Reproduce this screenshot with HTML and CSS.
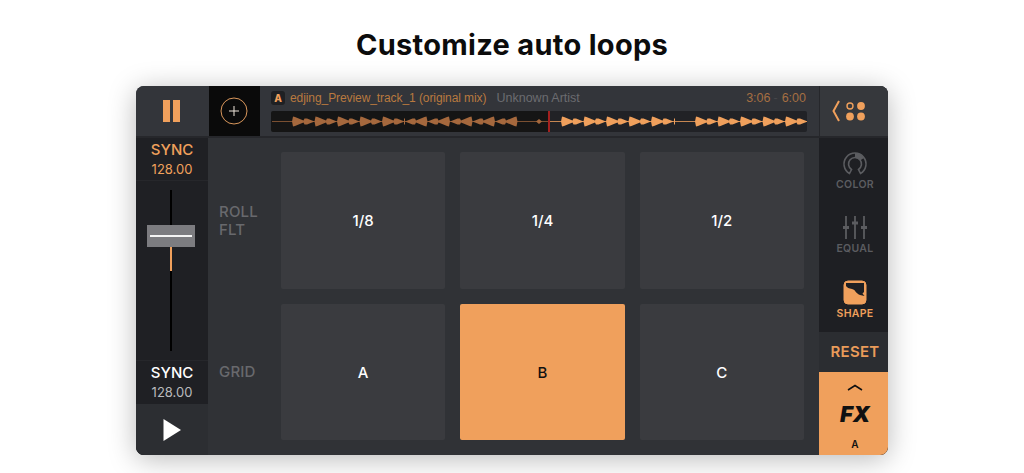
FILE: index.html
```html
<!DOCTYPE html>
<html lang="en">
<head>
<meta charset="utf-8">
<title>Customize auto loops</title>
<link rel="stylesheet" href="styles.css">
</head>
<body>
<h1 class="title">Customize auto loops</h1>
<div class="app">
  <div class="top">
    <div class="pause"><i></i><i></i></div>
    <div class="add">
      <svg width="28" height="28" viewBox="0 0 28 28"><circle cx="14" cy="14" r="13" fill="none" stroke="#d9975c" stroke-width="1"/><path d="M9 14h10M14 9v10" stroke="#f0e6dc" stroke-width="1" fill="none"/></svg>
    </div>
    <div class="track">
      <div class="meta">
        <span class="badge">A</span>
        <span class="name">edjing_Preview_track_1 (original mix)</span>
        <span class="artist">Unknown Artist</span>
        <span class="time">3:06<em>-</em>6:00</span>
      </div>
      <svg class="wave" width="536" height="21" viewBox="0 0 536 21">
        <defs>
          <path id="rp" d="M0 10.500 1 5.500 3 6 11.500 9.500 12.500 7.500 15 7.500 22.500 10.500 15 13.500 12.500 13.500 11.500 11.500 3 15 1 15.500Z"/>
          <path id="lp" d="M22.500 10.500 21.500 5.500 19.500 6 11 9.500 10 7.500 7.500 7.500 0 10.500 7.500 13.500 10 13.500 11 11.500 19.500 15 21.500 15.500Z"/>
        </defs>
        <rect width="278" height="21" x="0" fill="#151515"/>
        <rect x="278" width="258" height="21" fill="#212226"/>
        <g fill="#a5683d">
          <rect x="1" y="10" width="276" height="1" opacity="0.7"/>
          <use href="#rp" x="21"/><use href="#rp" x="43.500"/><use href="#rp" x="66"/><use href="#rp" x="88.500"/><use href="#rp" x="111"/>
          <rect x="133" y="7.500" width="1" height="6"/>
          <use href="#lp" x="134"/><use href="#lp" x="156.500"/><use href="#lp" x="179"/><use href="#lp" x="201.500"/><use href="#lp" x="224"/>
          <path d="M265 10.500 268 8 271 10.500 268 13Z"/>
        </g>
        <g fill="#f0a05c">
          <rect x="279" y="10" width="257" height="1" opacity="0.8"/>
          <use href="#rp" x="290"/><use href="#rp" x="312.500"/><use href="#rp" x="335"/><use href="#rp" x="357.500"/><use href="#rp" x="380"/>
          <rect x="403" y="7.500" width="1" height="6"/>
          <use href="#rp" x="424"/><use href="#rp" x="446.500"/><use href="#rp" x="469"/><use href="#rp" x="491.500"/><use href="#rp" x="514"/>
        </g>
        <rect x="277" width="2" height="21" fill="#a4201f"/>
      </svg>
    </div>
    <div class="menu">
      <svg width="36" height="24" viewBox="0 0 36 24"><path d="M7 2 1.500 12 7 22" fill="none" stroke="#f0a05c" stroke-width="2"/><circle cx="18" cy="7" r="3" fill="none" stroke="#f0a05c" stroke-width="1.400"/><circle cx="29" cy="7" r="3.900" fill="#f0a05c"/><circle cx="18" cy="17.500" r="3.900" fill="#f0a05c"/><circle cx="29" cy="17.500" r="3.900" fill="#f0a05c"/></svg>
    </div>
  </div>
  <div class="main">
    <div class="left">
      <div class="sync sync-a"><b>SYNC</b><span>128.00</span></div>
      <div class="slider">
        <div class="rail"></div>
        <div class="level"></div>
        <div class="cap"></div>
      </div>
      <div class="sync sync-b"><b>SYNC</b><span>128.00</span></div>
      <div class="play">
        <svg width="20" height="24" viewBox="0 0 20 24"><path d="M1.500 1 19 12 1.500 23Z" fill="#fff"/></svg>
      </div>
    </div>
    <div class="pads">
      <div class="label">ROLL<br>FLT</div>
      <div class="pad">1/8</div>
      <div class="pad">1/4</div>
      <div class="pad">1/2</div>
      <div class="label">GRID</div>
      <div class="pad">A</div>
      <div class="pad on">B</div>
      <div class="pad">C</div>
    </div>
    <div class="right">
      <div class="tool">
        <svg width="26" height="25" viewBox="0 0 26 25"><path d="M7.500 22.500A11 11 0 1 1 18.500 22.500L16.500 18.500A6.500 6.500 0 1 0 9.500 18.500Z" fill="none" stroke="#5b5c60" stroke-width="1.600"/><path d="M13 2V7A6 6 0 0 1 18 9.500L22 7A11 11 0 0 0 13 2Z" fill="#5b5c60"/></svg>
        <span>COLOR</span>
      </div>
      <div class="tool">
        <svg width="26" height="25" viewBox="0 0 26 25"><path d="M4 1v23M13 1v23M22 1v23" stroke="#5b5c60" stroke-width="1.800" fill="none"/><path d="M1 12.500h6M10 8h6M19 12.500h6" stroke="#5b5c60" stroke-width="3" fill="none"/></svg>
        <span>EQUAL</span>
      </div>
      <div class="tool tool-on">
        <svg width="24" height="25" viewBox="0 0 24 25"><rect x="1" y="1" width="22" height="23" rx="4" fill="#f0a05c" stroke="#f0a05c"/><path d="M3 3H21V12L19.500 13.500 21.500 16 17 15C12 13 13 10 9 9 6 8.500 4 7.500 3 6Z" fill="#1e1f23"/></svg>
        <span>SHAPE</span>
      </div>
      <div class="reset">RESET</div>
      <div class="fx">
        <svg width="16" height="7" viewBox="0 0 16 7"><path d="M1 6 8 1.500 15 6" fill="none" stroke="#111" stroke-width="1.500"/></svg>
        <strong>FX</strong>
        <span>A</span>
      </div>
    </div>
  </div>
</div>
</body>
</html>
```
FILE: styles.css
```css
* { box-sizing: border-box; }
html, body { margin: 0; height: 100%; overflow: hidden; }
body {
  background: #fff;
  font-family: Inter, "Liberation Sans", sans-serif;
  display: flex;
  flex-direction: column;
  align-items: center;
}
.title {
  margin: 26px 0 0;
  height: 60px;
  font-size: 29px;
  line-height: 37px;
  font-weight: 700;
  color: #0c0c0c;
  letter-spacing: 0.3px;
}
.app {
  width: 752px;
  height: 369px;
  border-radius: 8px;
  overflow: hidden;
  display: flex;
  flex-direction: column;
  background: #313337;
  box-shadow: 0 4px 28px rgba(0, 0, 0, 0.28);
}
.top {
  height: 52px;
  flex: none;
  display: flex;
  background: #33353a;
  border-bottom: 2px solid #26272b;
}
.pause {
  width: 73px;
  display: flex;
  justify-content: center;
  align-items: center;
  gap: 3px;
  padding: 0 2px 1px 0;
}
.pause i { width: 7px; height: 22px; background: #f0a05c; }
.add {
  width: 51px;
  background: #0a0a0a;
  display: flex;
  align-items: center;
  justify-content: center;
  padding-right: 2px;
}
.track {
  flex: 1;
  padding: 5px 12px 0 11px;
  display: flex;
  flex-direction: column;
  gap: 6px;
}
.meta {
  height: 14px;
  display: flex;
  align-items: center;
  font-family: "Liberation Sans", sans-serif;
  font-size: 12.500px;
}
.badge {
  width: 14px;
  height: 14px;
  border-radius: 3px;
  background: #1f2023;
  color: #f0a05c;
  font-family: Inter, sans-serif;
  font-weight: 800;
  font-size: 10px;
  display: flex;
  align-items: center;
  justify-content: center;
  margin-right: 5px;
}
.name { color: #b9793f; font-size: 12px; letter-spacing: -0.080px; }
.artist { color: #6b6c70; margin-left: 10px; }
.time { color: #a56f42; margin-left: auto; margin-right: 1px; }
.time em { font-style: normal; color: #45464a; margin: 0 4px 0 3px; }
.wave { display: block; border-radius: 2px; }
.menu {
  width: 69px;
  border-left: 1px solid #26272b;
  display: flex;
  align-items: center;
  justify-content: center;
  padding-right: 8px;
  background: #36383c;
}
.main { flex: 1; display: flex; min-height: 0; }
.left {
  width: 72px;
  flex: none;
  display: flex;
  flex-direction: column;
  background: #1f2024;
}
.sync {
  display: flex;
  flex-direction: column;
  align-items: center;
  justify-content: center;
  gap: 2px;
  height: 43px;
  flex: none;
}
.sync b { font-size: 15px; line-height: 18px; font-weight: 500; }
.sync span { font-size: 13px; line-height: 16px; }
.sync-a { color: #f0a05c; border-bottom: 1px solid #26272b; }
.sync-b { color: #fff; border-top: 1px solid #26272b; height: 44px; padding-bottom: 2px; }
.sync-b span { color: #b9babd; }
.slider { flex: 1; position: relative; }
.rail {
  position: absolute;
  left: 34px;
  top: 9px;
  bottom: 9px;
  width: 2px;
  background: #000;
}
.level {
  position: absolute;
  left: 34px;
  top: 66px;
  width: 2px;
  height: 24px;
  background: #f0a05c;
}
.cap {
  position: absolute;
  left: 11px;
  top: 44px;
  width: 48px;
  height: 22px;
  background: #7c7c80;
}
.cap::after {
  content: "";
  display: block;
  height: 2px;
  margin: 10px 3px 0;
  background: #f4f4f4;
}
.play {
  height: 51px;
  flex: none;
  background: #2c2e32;
  display: flex;
  align-items: center;
  justify-content: center;
}
.pads {
  flex: 1;
  display: grid;
  grid-template-columns: 47px 1fr 1fr 1fr;
  grid-template-rows: 137px 136px;
  gap: 15px;
  padding: 14px 15px 15px 11px;
  background: #303236;
}
.label {
  align-self: center;
  color: #68696d;
  font-size: 15px;
  line-height: 18px;
  font-weight: 500;
  letter-spacing: 0.2px;
}
.pad {
  background: #3a3b3f;
  border-radius: 2px;
  color: #fff;
  display: flex;
  align-items: center;
  justify-content: center;
  font-size: 15px;
  font-weight: 500;
}
.pad.on { background: #f0a05c; color: #111; }
.right {
  width: 69px;
  flex: none;
  display: flex;
  flex-direction: column;
  background: #1e1f23;
}
.tool {
  height: 64.670px;
  flex: none;
  display: flex;
  flex-direction: column;
  align-items: center;
  justify-content: flex-end;
  gap: 2px;
  padding: 0 0 11px 3px;
  color: #5b5c60;
  font-size: 10.500px;
  line-height: 14px;
  font-weight: 600;
  letter-spacing: 0.3px;
}
.tool-on { color: #f0a05c; }
.reset {
  height: 40px;
  flex: none;
  background: #2b2d31;
  color: #ea9c5a;
  font-size: 15px;
  font-weight: 600;
  display: flex;
  align-items: center;
  justify-content: center;
  letter-spacing: 0.3px;
  padding-left: 3px;
}
.fx {
  flex: 1;
  background: #f0a05c;
  color: #111;
  display: flex;
  flex-direction: column;
  align-items: center;
  padding: 12px 0 0 3px;
}
.fx svg { display: block; }
.fx strong {
  font-size: 22px;
  line-height: 26px;
  margin-top: 10px;
  font-style: italic;
  font-weight: 900;
}
.fx span { font-size: 10px; line-height: 12px; margin-top: 11px; font-weight: 600; }
```
